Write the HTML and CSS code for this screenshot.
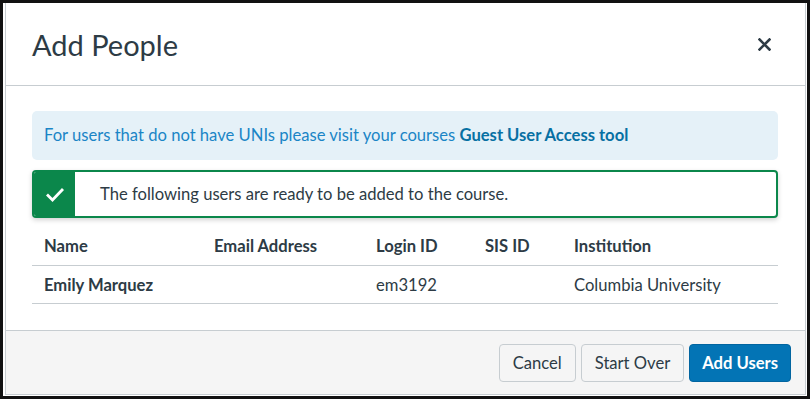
FILE: index.html
```html
<!DOCTYPE html>
<html lang="en">
<head>
    <meta charset="UTF-8">
    <meta name="viewport" content="width=device-width, initial-scale=1.0">
    <title>Add People</title>
    <link rel="stylesheet" href="styles.css">
</head>
<body>
    <div class="frame">
        <div class="modal">
            <div class="modal-header">
                <h2>Add People</h2>
                <button class="close-btn" aria-label="Close">
                    <svg width="13" height="13" viewBox="0 0 13 13"><path d="M1.5 1.5l10 10M11.5 1.5l-10 10" stroke="#2d3b45" stroke-width="2.6" stroke-linecap="square"/></svg>
                </button>
            </div>

            <div class="modal-body">
                <div class="info-box">
                    For users that do not have UNIs please visit your courses <a href="#">Guest User Access tool</a>
                </div>

                <div class="success-alert">
                    <div class="alert-icon">
                        <svg width="20" height="16" viewBox="0 0 20 16"><path d="M2 8.5l5.5 5.5L18 3" fill="none" stroke="#fff" stroke-width="2.8"/></svg>
                    </div>
                    <div class="alert-text">The following users are ready to be added to the course.</div>
                </div>

                <div class="people-table">
                    <div class="row head">
                        <div>Name</div>
                        <div>Email Address</div>
                        <div>Login ID</div>
                        <div>SIS ID</div>
                        <div>Institution</div>
                    </div>
                    <div class="row">
                        <div class="name">Emily Marquez</div>
                        <div></div>
                        <div>em3192</div>
                        <div></div>
                        <div>Columbia University</div>
                    </div>
                </div>
            </div>

            <div class="modal-footer">
                <button class="btn">Cancel</button>
                <button class="btn">Start Over</button>
                <button class="btn primary">Add Users</button>
            </div>
        </div>
    </div>
</body>
</html>
```

FILE: styles.css
```css
        * {
            box-sizing: border-box;
        }
        body {
            margin: 0;
            padding: 0;
            font-family: 'Lato', sans-serif;
            color: #2d3b45;
            background-color: #fff;
        }
        .frame {
            height: 399px;
            border: 3px solid #111;
            padding: 0 1px 1px 2px;
        }
        .modal {
            height: 100%;
            display: flex;
            flex-direction: column;
            border: 1px solid #c7cdd1;
            border-top: none;
        }
        .modal-header {
            height: 83px;
            display: flex;
            align-items: center;
            justify-content: space-between;
            padding: 0 26px 0 26px;
            border-bottom: 1px solid #c7cdd1;
        }
        .modal-header h2 {
            margin: 0;
            font-size: 29px;
            font-weight: 400;
            color: #2d3b45;
            line-height: 1;
        }
        .close-btn {
            border: none;
            background: none;
            padding: 0;
            margin-right: 8px;
            margin-top: 1px;
            display: flex;
        }
        .modal-body {
            flex: 1;
            padding: 25px 27px 0 26px;
        }
        .info-box {
            background-color: #e5f1f8;
            border-radius: 5px;
            padding: 12px 12px;
            font-size: 16.6px;
            line-height: 25px;
            color: #1a85c6;
            margin-bottom: 10px;
        }
        .info-box a {
            color: #0770a3;
            font-weight: 700;
            text-decoration: none;
        }
        .success-alert {
            display: flex;
            height: 48px;
            border: 2px solid #0b874b;
            border-radius: 4px;
            box-shadow: 0 2px 5px rgba(0, 0, 0, 0.18);
            background-color: #fff;
            overflow: hidden;
        }
        .alert-icon {
            width: 41px;
            background-color: #0b874b;
            display: flex;
            align-items: center;
            justify-content: center;
        }
        .alert-text {
            display: flex;
            align-items: center;
            padding-left: 25px;
            font-size: 16.6px;
        }
        .people-table {
            margin-top: 10px;
        }
        .row {
            display: grid;
            grid-template-columns: 170px 162px 109px 89px 1fr;
            height: 38px;
            align-items: center;
            border-bottom: 1px solid #c7cdd1;
            font-size: 16.6px;
        }
        .row div {
            padding-left: 12px;
        }
        .row.head {
            padding-bottom: 1px;
        }
        .row.head div,
        .row .name {
            font-weight: 700;
        }
        .modal-footer {
            height: 64px;
            background-color: #f5f5f5;
            border-top: 1px solid #c7cdd1;
            display: flex;
            justify-content: flex-end;
            align-items: center;
            gap: 5px;
            padding: 0 14px 0 0;
        }
        .btn {
            font-family: 'Lato', sans-serif;
            font-size: 16.6px;
            height: 38px;
            padding: 0 13px;
            border-radius: 4px;
            border: 1px solid #c7cdd1;
            background-color: #f5f5f5;
            color: #2d3b45;
        }
        .btn.primary {
            background-color: #0374b5;
            border-color: #0265a0;
            color: #fff;
            font-weight: 700;
            padding: 0 12px;
        }
```
